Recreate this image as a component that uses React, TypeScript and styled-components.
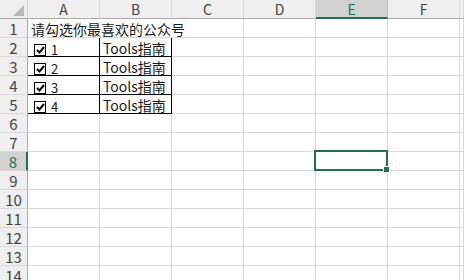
import styled, { createGlobalStyle } from 'styled-components';

const GlobalStyle = createGlobalStyle`
  html, body {
    margin: 0;
    padding: 0;
    background: #fff;
    overflow: hidden;
  }
  body {
    font-family: 'Noto Sans CJK SC', 'Noto Sans', sans-serif;
    color: #1a1a1a;
  }
`;

const COLS = ['A', 'B', 'C', 'D', 'E', 'F', 'G'];
const ROWS = 14;
const ACTIVE_COL = 'E';
const ACTIVE_ROW = 8;

const Sheet = styled.div`
  display: grid;
  grid-template-columns: 28px repeat(6, 72px) 1fr;
  grid-auto-rows: 19px;
  width: 464px;
`;

const Corner = styled.div`
  box-sizing: border-box;
  background: #efefef;
  border-right: 1px solid #d0d0d0;
  border-bottom: 1px solid #ababab;
  display: flex;
  align-items: flex-end;
  justify-content: flex-end;
  padding: 0 3px 2px 0;
`;

const ColHeader = styled.div<{ $active?: boolean }>`
  box-sizing: border-box;
  background: ${(p) => (p.$active ? '#d2d2d2' : '#efefef')};
  border-right: 1px solid ${(p) => (p.$active ? '#bdbdbd' : '#d9d9d9')};
  border-bottom: ${(p) => (p.$active ? '2px solid #217346' : '1px solid #ababab')};
  color: ${(p) => (p.$active ? '#217346' : '#444')};
  font-size: 14px;
  display: flex;
  align-items: center;
  justify-content: center;
  line-height: 1;
  overflow: hidden;
`;

const RowHeader = styled.div<{ $active?: boolean }>`
  box-sizing: border-box;
  background: ${(p) => (p.$active ? '#d2d2d2' : '#efefef')};
  border-right: ${(p) => (p.$active ? '2px solid #217346' : '1px solid #ababab')};
  border-bottom: 1px solid #d9d9d9;
  color: ${(p) => (p.$active ? '#217346' : '#444')};
  font-size: 15px;
  display: flex;
  align-items: center;
  justify-content: center;
  line-height: 1;
`;

const Cell = styled.div<{ $span?: number; $right?: boolean; $bottom?: boolean }>`
  box-sizing: border-box;
  position: relative;
  grid-column: span ${(p) => p.$span ?? 1};
  border-right: 1px solid ${(p) => (p.$right ? '#000' : '#d9d9d9')};
  border-bottom: 1px solid ${(p) => (p.$bottom ? '#000' : '#d9d9d9')};
  font-size: 14px;
  display: flex;
  align-items: center;
  padding: 1px 0 0 3px;
  white-space: nowrap;
  line-height: 1;
`;

const Selection = styled.div`
  position: absolute;
  left: -2px;
  top: -2px;
  right: -1px;
  bottom: -1px;
  border: 2px solid #217346;
  pointer-events: none;
  z-index: 2;
`;

const Handle = styled.div`
  position: absolute;
  right: -4px;
  bottom: -4px;
  width: 5px;
  height: 5px;
  background: #217346;
  border: 1px solid #fff;
`;

const Check = styled.span`
  display: inline-flex;
  align-items: center;
  gap: 5px;
  padding: 4px 0 0 3px;
  font-size: 13px;
`;

const Box = styled.span`
  box-sizing: border-box;
  width: 12px;
  height: 12px;
  border: 1px solid #000;
  background: #fff;
  display: inline-flex;
  align-items: center;
  justify-content: center;
`;

function CheckBox({ label }: { label: string }) {
  return (
    <Check>
      <Box>
        <svg width="9" height="8" viewBox="0 0 9 8">
          <path d="M1 4 L3.5 6.5 L8 1" fill="none" stroke="#000" strokeWidth="2" />
        </svg>
      </Box>
      {label}
    </Check>
  );
}

export default function App() {
  const rows = [];
  for (let r = 1; r <= ROWS; r++) {
    const cells = [];
    if (r === 1) {
      cells.push(
        <Cell key="A" $span={3}>
          请勾选你最喜欢的公众号
        </Cell>
      );
      COLS.slice(3).forEach((c) => cells.push(<Cell key={c} />));
    } else {
      COLS.forEach((c) => {
        const inBox = r >= 2 && r <= 5 && (c === 'A' || c === 'B');
        const sel = r === ACTIVE_ROW && c === ACTIVE_COL;
        cells.push(
          <Cell key={c} $right={inBox} $bottom={inBox}>
            {inBox && c === 'A' && <CheckBox label={String(r - 1)} />}
            {inBox && c === 'B' && 'Tools指南'}
            {sel && (
              <Selection>
                <Handle />
              </Selection>
            )}
          </Cell>
        );
      });
    }
    rows.push(
      <RowHeader key={'h' + r} $active={r === ACTIVE_ROW}>
        {r}
      </RowHeader>,
      ...cells
    );
  }

  return (
    <>
      <GlobalStyle />
      <Sheet>
        <Corner>
          <svg width="11" height="11" viewBox="0 0 11 11">
            <polygon points="11,0 11,11 0,11" fill="#b9b9b9" />
          </svg>
        </Corner>
        {COLS.map((c) => (
          <ColHeader key={c} $active={c === ACTIVE_COL}>
            {c === 'G' ? '' : c}
          </ColHeader>
        ))}
        {rows}
      </Sheet>
    </>
  );
}
